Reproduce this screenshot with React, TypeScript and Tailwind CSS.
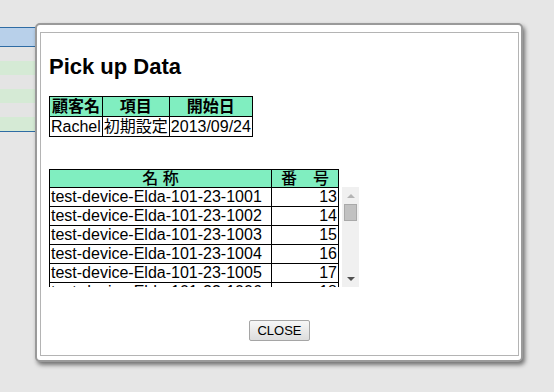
const devices = [
  ["test-device-Elda-101-23-1001", 13],
  ["test-device-Elda-101-23-1002", 14],
  ["test-device-Elda-101-23-1003", 15],
  ["test-device-Elda-101-23-1004", 16],
  ["test-device-Elda-101-23-1005", 17],
  ["test-device-Elda-101-23-1006", 18],
];

const App = () => {
  return (
    <div className="relative w-[554px] h-[392px] overflow-hidden bg-[#e6e6e6] font-['Liberation_Sans','Noto_Sans_CJK_JP',sans-serif] text-black">
      {/* Page behind the modal */}
      <div className="pt-[27px] w-[420px]">
        <div className="h-[20px] bg-[#b8d0ea] border-y border-[#2f6ca4]" />
        <div className="border-b border-[#2f6ca4]">
          {[0, 1, 2, 3, 4, 5].map((i) => (
            <div key={i} className={`h-[14px] ${i % 2 === 1 ? "bg-[#d5ead5]" : "bg-[#e4e4e4]"}`} />
          ))}
        </div>
      </div>

      {/* Modal */}
      <div className="absolute left-[35px] top-[23px] w-[488px] h-[339px] flex flex-col rounded-[5px] border-2 border-[#9a9a9a] bg-white pt-[7px] pl-[3px] pr-[2px] pb-[4px] shadow-[2px_3px_4px_rgba(0,0,0,0.5)]">
        <div className="flex-1 flex flex-col border border-[#b4b4b4] pl-[8px] pt-[21px]">
          <h1 className="text-[22px] leading-[26px] font-bold">Pick up Data</h1>

          <table className="mt-[16px] border-collapse text-[16px] leading-[19px] self-start">
            <thead>
              <tr className="bg-[#80eec0]">
                <th className="border border-black px-px py-0 font-bold">顧客名</th>
                <th className="border border-black px-px py-0 font-bold">項目</th>
                <th className="border border-black px-px py-0 font-bold">開始日</th>
              </tr>
            </thead>
            <tbody>
              <tr>
                <td className="border border-black px-px py-0">Rachel</td>
                <td className="border border-black px-px py-0">初期設定</td>
                <td className="border border-black px-px py-0">2013/09/24</td>
              </tr>
            </tbody>
          </table>

          <table className="mt-[32px] w-[290px] table-fixed border-collapse text-[16px] leading-[17px]">
            <colgroup>
              <col className="w-[222px]" />
              <col />
            </colgroup>
            <thead>
              <tr className="bg-[#80eec0]">
                <th className="border border-black p-0 font-medium">名 称</th>
                <th className="border border-black p-0 font-medium">番　号</th>
              </tr>
            </thead>
          </table>

          <div className="-mt-px h-[100px] flex overflow-hidden">
            <table className="w-[290px] self-start table-fixed border-collapse text-[16px] leading-[18px]">
              <colgroup>
                <col className="w-[222px]" />
                <col />
              </colgroup>
              <tbody>
                {devices.map(([name, no]) => (
                  <tr key={name}>
                    <td className="border border-black py-0 px-px whitespace-nowrap overflow-hidden">{name}</td>
                    <td className="border border-black py-0 px-px text-right">{no}</td>
                  </tr>
                ))}
              </tbody>
            </table>

            {/* Scrollbar */}
            <div className="ml-[3px] w-[17px] h-full flex flex-col items-center bg-[#f0f0f0]">
              <div className="h-[17px] flex items-center justify-center">
                <div className="w-0 h-0 border-x-[4px] border-x-transparent border-b-[4px] border-b-[#b4b4b4]" />
              </div>
              <div className="w-[13px] h-[17px] bg-[#c1c1c1] border border-[#a9a9a9]" />
              <div className="flex-1" />
              <div className="h-[17px] flex items-center justify-center">
                <div className="w-0 h-0 border-x-[4px] border-x-transparent border-t-[4px] border-t-[#505050]" />
              </div>
            </div>
          </div>

          <div className="mt-[33px] flex justify-center pr-[8px]">
            <button className="w-[61px] h-[21px] rounded-[2px] border border-[#a5a5a5] bg-gradient-to-b from-[#f7f7f7] to-[#dddddd] text-[13px] leading-none text-black">
              CLOSE
            </button>
          </div>
        </div>
      </div>
    </div>
  );
};

export default App;
